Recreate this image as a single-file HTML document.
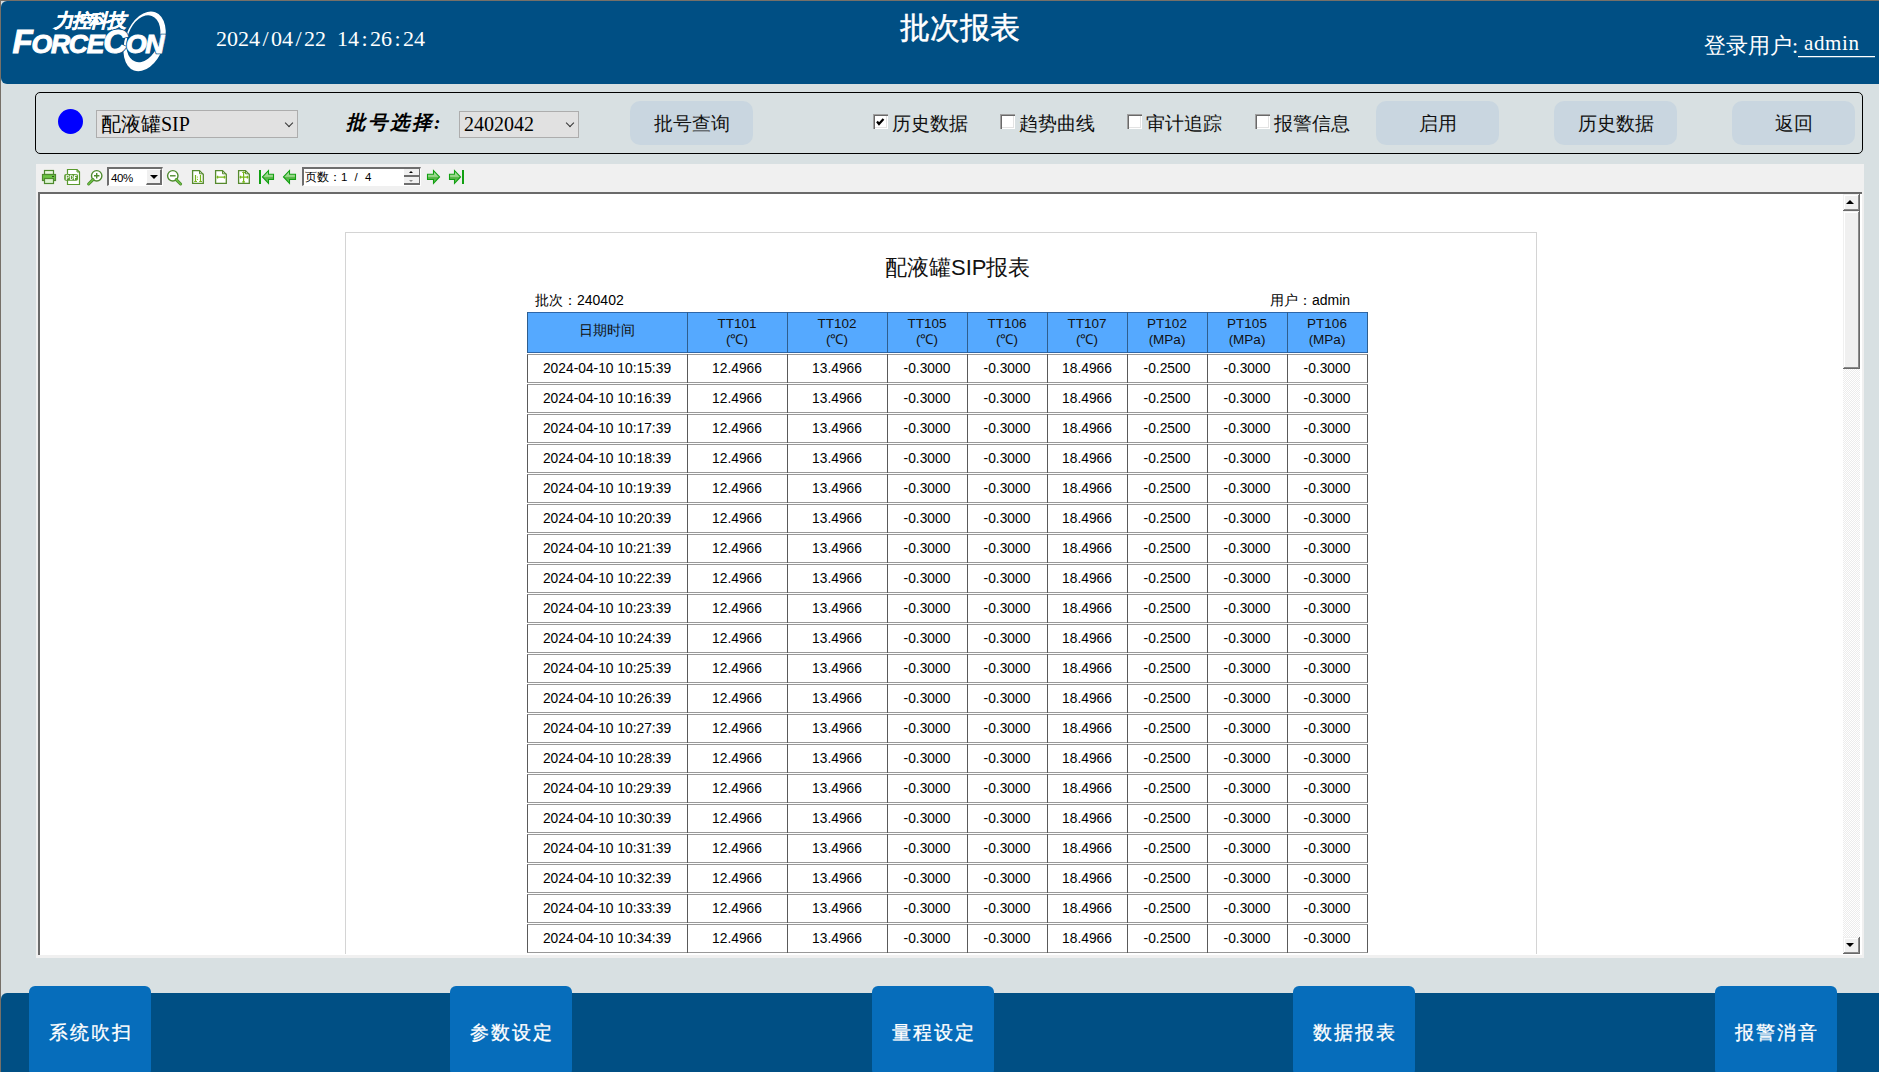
<!DOCTYPE html><html><head><meta charset="utf-8"><style>
*{margin:0;padding:0;box-sizing:border-box}
html,body{width:1879px;height:1072px;overflow:hidden;background:#D8E0E2;font-family:"Liberation Sans",sans-serif}
.a{position:absolute}
#outer{left:0;top:0;width:1879px;height:1072px;border-left:1px solid #767068;border-top:1px solid #767068}
#hdr{left:1px;top:1px;width:1878px;height:83px;background:#004F84;border-radius:6px 0 0 6px}
#title{left:900px;top:11px;font-family:"Liberation Serif",serif;font-size:30px;color:#fff;font-weight:normal;-webkit-text-stroke:0.5px #fff;white-space:nowrap;line-height:34px}
#dt{left:216px;top:28px;font-family:"Liberation Serif",serif;font-size:22px;color:#fff;white-space:nowrap;line-height:22px}
#dt span{display:inline-block;width:11px;text-align:center}
#login{left:1704px;top:34px;font-family:"Liberation Serif",serif;font-size:22px;color:#fff;white-space:nowrap;line-height:24px}
#uline{left:1798px;top:56px;width:77px;height:1px;background:#fff;box-shadow:0 0.5px 0 rgba(255,255,255,.5)}
#adm{left:1804px;top:32px;font-family:"Liberation Serif",serif;font-size:21px;color:#fff;white-space:nowrap;line-height:22px;letter-spacing:0.6px}
#adm span{display:inline-block;width:11px;text-align:center}
#frame{left:35px;top:92px;width:1828px;height:62px;border:1px solid #000;border-radius:5px}
.btn{height:44px;width:123px;background:#C9D6E0;border-radius:10px;font-family:"Liberation Serif",serif;font-size:18.5px;color:#111;text-align:center;line-height:46px;top:101px}
.combo{background:#E1E1E1;border:1px solid #ADADAD;height:27px;font-family:"Liberation Serif",serif;font-size:20px;color:#000;line-height:25px;padding-left:4px;white-space:nowrap}
.chev{position:absolute;right:5px;top:8px;width:6px;height:6px;border-right:1px solid #333;border-bottom:1px solid #333;transform:rotate(45deg)}
.cb{width:15px;height:15px;background:#fff;top:114px;box-shadow:inset 1px 1px #A0A0A0,inset 2px 2px #696969,inset -1px -1px #fff,inset -2px -2px #E3E3E3}
.cbt{top:112px;font-family:"Liberation Serif",serif;font-size:18.5px;line-height:24px;color:#111;white-space:nowrap}
#tb{left:36px;top:164px;width:1828px;height:794px;background:#F0F0F0}
#view{left:38px;top:192px;width:1824px;height:763px;background:#fff;border-top:2px solid #6A6A6A;border-left:2px solid #6A6A6A}
#page{left:345px;top:232px;width:1192px;height:740px;border:1px solid #D4D4D4;background:#fff}
#sb{left:1843px;top:194px;width:17px;height:760px;background:repeating-conic-gradient(#fff 0 25%,#ECECEC 0 50%) 0 0/2px 2px}
.sbb{width:17px;height:17px;background:#F0F0F0;box-shadow:inset -1px -1px #696969,inset 1px 1px #F0F0F0,inset -2px -2px #8A8A8A,inset 2px 2px #fff}
#bot{left:1px;top:993px;width:1878px;height:79px;background:#004F84;border-radius:6px 0 0 0}
.bb{top:986px;width:122px;height:90px;background:#066DBB;border-radius:6px;color:#fff;font-family:"Liberation Serif",serif;font-weight:500;font-size:19px;text-align:center;line-height:20px;padding-top:37px;letter-spacing:2px;text-indent:2px;-webkit-text-stroke:0.3px #fff}
.hd{background:#55A9FF;top:312px;height:41px;border-top:1px solid #2E66A8;border-bottom:1px solid #2E66A8}
.th{top:312px;height:41px;text-align:center;font-size:13.5px;line-height:16px;color:#111;padding-top:4px;white-space:nowrap}
.row{left:527px;width:841px;height:29px;border-top:1px solid #999;border-bottom:1px solid #999;border-left:1px solid #5A5A5A;border-right:1px solid #5A5A5A}
.vl{width:1px;background:#5A5A5A}
.td{height:29px;line-height:29px;text-align:center;font-size:13.8px;color:#000;white-space:nowrap}
.tch{font-size:11.5px;line-height:14px;color:#000;white-space:nowrap}
.tch span{display:inline-block;text-align:center}
.info{font-size:14px;line-height:16px;color:#000;white-space:nowrap}
</style></head><body>
<div class="a" id="outer"></div>
<div class="a" id="hdr"></div>
<svg class="a" style="left:0;top:0" width="180" height="84" viewBox="0 0 180 84">
<path fill="#fff" fill-rule="evenodd" transform="rotate(20 144.6 41.4)" d="M144.60 10.40 A19.50 31.00 0 1 1 144.60 72.40 A19.50 31.00 0 1 1 144.60 10.40 Z M142.60 15.00 A15.80 24.30 0 1 1 142.60 63.60 A15.80 24.30 0 1 1 142.60 15.00 Z"/>
<text x="54" y="27" font-family="Liberation Sans" font-weight="bold" font-style="italic" font-size="19" letter-spacing="-1.3" fill="#fff" stroke="#004F84" stroke-width="2.5">力控科技</text>
<text x="54" y="27" font-family="Liberation Sans" font-weight="bold" font-style="italic" font-size="19" letter-spacing="-1.3" fill="#fff" stroke="#fff" stroke-width="0.4">力控科技</text>
<text x="12.5" y="53.3" font-family="Liberation Sans" font-weight="bold" font-style="italic" font-size="33" letter-spacing="-1.2" fill="#fff" stroke="#004F84" stroke-width="2.5">F<tspan font-size="26.5">ORCE</tspan>C<tspan font-size="26.5">ON</tspan></text>
<text x="12.5" y="53.3" font-family="Liberation Sans" font-weight="bold" font-style="italic" font-size="33" letter-spacing="-1.2" fill="#fff" stroke="#fff" stroke-width="1">F<tspan font-size="26.5">ORCE</tspan>C<tspan font-size="26.5">ON</tspan></text>
</svg>
<div class="a" id="dt"><span>2</span><span>0</span><span>2</span><span>4</span><span>/</span><span>0</span><span>4</span><span>/</span><span>2</span><span>2</span><span>&nbsp;</span><span>1</span><span>4</span><span>:</span><span>2</span><span>6</span><span>:</span><span>2</span><span>4</span></div>
<div class="a" id="title">批次报表</div>
<div class="a" id="login">登录用户:</div>
<div class="a" id="adm">admin</div>
<div class="a" id="uline"></div>
<div class="a" id="frame"></div>
<div class="a" style="left:58px;top:109px;width:25px;height:25px;border-radius:50%;background:#0000FF"></div>
<div class="a combo" style="left:96px;top:110px;width:202px;height:28px;line-height:26px">配液罐SIP<div class="chev" style="top:9px"></div></div>
<div class="a" style="left:346px;top:111px;font-family:'Liberation Serif',serif;font-size:19.5px;font-weight:bold;font-style:italic;line-height:24px;color:#000;white-space:nowrap;letter-spacing:2px">批号选择:</div>
<div class="a combo" style="left:459px;top:111px;width:120px">2402042<div class="chev"></div></div>
<div class="a btn" style="left:630px">批号查询</div>
<div class="a cb" style="left:873px"><svg width="13" height="13" style="position:absolute;left:0;top:0"><path d="M4 7.5 L6 10 L10.5 5" stroke="#000" stroke-width="2.2" fill="none"/></svg></div>
<div class="a cbt" style="left:892px">历史数据</div>
<div class="a cb" style="left:1000px"></div>
<div class="a cbt" style="left:1019px">趋势曲线</div>
<div class="a cb" style="left:1127px"></div>
<div class="a cbt" style="left:1146px">审计追踪</div>
<div class="a cb" style="left:1255px"></div>
<div class="a cbt" style="left:1274px">报警信息</div>
<div class="a btn" style="left:1376px">启用</div>
<div class="a btn" style="left:1554px">历史数据</div>
<div class="a btn" style="left:1732px">返回</div>
<div class="a" id="tb"></div>
<div class="a" id="view"></div>
<svg class="a" style="left:36px;top:164px" width="440" height="28" viewBox="36 164 440 28">
<defs>
<linearGradient id="ag" x1="0" y1="0" x2="0" y2="1"><stop offset="0" stop-color="#BFE8B5"/><stop offset="0.5" stop-color="#8ED27F"/><stop offset="0.55" stop-color="#4DB33F"/><stop offset="1" stop-color="#7CCB6C"/></linearGradient>
</defs>
<!-- printer -->
<rect x="44.5" y="170.5" width="9" height="4" fill="#EAF7E0" stroke="#4E8A2E" stroke-width="1.2"/>
<rect x="42.5" y="174.5" width="13" height="6" fill="#6CC444" stroke="#4E8A2E" stroke-width="1.2"/>
<rect x="44.5" y="178.5" width="9" height="5" fill="#DDF3D2" stroke="#4E8A2E" stroke-width="1.2"/>
<rect x="52" y="176" width="2" height="1" fill="#2F4F1F"/>
<!-- pdf -->
<path d="M67.5 169.5 H77 L79.5 172 V184.5 H67.5 Z" fill="#fff" stroke="#5A9A2E" stroke-width="1.2"/>
<path d="M77 169.5 V172 H79.5" fill="none" stroke="#5A9A2E" stroke-width="1"/>
<rect x="64.2" y="174" width="13.8" height="6.8" rx="1.8" fill="#5A9A2E"/>
<path d="M66.3 180 V175.3 H67.8 Q69 175.3 69 176.6 Q69 177.9 67.8 177.9 H66.3 M70.4 175.3 V179.5 H71.5 Q73.1 179.5 73.1 177.4 Q73.1 175.3 71.5 175.3 Z M74.5 179.8 V175.3 H76.8 M74.5 177.4 H76.3" fill="none" stroke="#fff" stroke-width="1"/>
<!-- zoom in -->
<circle cx="96.7" cy="175.8" r="5.2" fill="#fff" stroke="#4E8A2E" stroke-width="1.4"/>
<path d="M94 175.8 H99.4 M96.7 173.1 V178.5" stroke="#4E8A2E" stroke-width="1.4"/>
<path d="M93 179.6 L88.6 184" stroke="#4E8A2E" stroke-width="3" stroke-linecap="round"/>
<path d="M93 179.6 L88.6 184" stroke="#6CC444" stroke-width="1.4" stroke-linecap="round"/>
<!-- zoom out -->
<circle cx="172.8" cy="175.8" r="5.2" fill="#fff" stroke="#4E8A2E" stroke-width="1.4"/>
<path d="M170 175.8 H175.6" stroke="#4E8A2E" stroke-width="1.4"/>
<path d="M176.2 179.6 L180.6 184" stroke="#4E8A2E" stroke-width="3" stroke-linecap="round"/>
<path d="M176.2 179.6 L180.6 184" stroke="#6CC444" stroke-width="1.4" stroke-linecap="round"/>
<!-- page icons -->
<g fill="#fff" stroke="#568A2E" stroke-width="1.3">
<path d="M192.6 170.6 H199.5 L203.3 174.4 V183.4 H192.6 Z"/>
<path d="M215.6 170.6 H222.5 L226.3 174.4 V183.4 H215.6 Z"/>
<path d="M238.6 170.6 H245.5 L249.3 174.4 V183.4 H238.6 Z"/>
</g>
<g fill="none" stroke="#568A2E" stroke-width="1">
<path d="M199.5 170.6 V173.8 H203.3"/><path d="M222.5 170.6 V173.8 H226.3"/><path d="M245.5 170.6 V173.8 H249.3"/>
</g>
<g stroke="#77B81A" stroke-width="1.2" fill="none">
<path d="M195.5 175 V181.5 M194.2 181.5 H197 M200.5 175 V181.5 M199.2 181.5 H202"/>
<path d="M216.5 177.2 H225.5 M217.6 175.8 V178.6 M224.4 175.8 V178.6"/>
<path d="M239.5 177.2 H248.5 M240.6 175.8 V178.6 M247.4 175.8 V178.6 M243.6 171.5 V182.8 M242.2 172.5 H245 M242.2 181.8 H245"/>
</g>
<circle cx="197.5" cy="177" r="0.6" fill="#77B81A"/><circle cx="197.5" cy="179.3" r="0.6" fill="#77B81A"/>
<!-- arrows -->
<g fill="url(#ag)" stroke="#12A012" stroke-width="1.1" stroke-linejoin="miter">
<path d="M262.5 176.9 L268.5 170.6 V174.3 H273.5 V179.5 H268.5 V183.4 Z"/>
<path d="M283.5 176.9 L289.5 170.6 V174.3 H295.5 V179.5 H289.5 V183.4 Z"/>
<path d="M439.5 176.9 L433.5 170.6 V174.3 H427.5 V179.5 H433.5 V183.4 Z"/>
<path d="M460.5 176.9 L454.5 170.6 V174.3 H449.5 V179.5 H454.5 V183.4 Z"/>
</g>
<rect x="259" y="170" width="2" height="14" fill="#12A012"/>
<rect x="462" y="170" width="2" height="14" fill="#12A012"/>
</svg>
<div class="a" style="left:107px;top:167px;width:56px;height:19px;background:#fff;border-top:2px solid #6E6E6E;border-left:2px solid #6E6E6E;border-right:1px solid #fff;border-bottom:1px solid #fff"></div>
<div class="a" style="left:146px;top:169px;width:16px;height:16px;background:#F0F0F0;border-right:2px solid #6E6E6E;border-bottom:2px solid #6E6E6E;border-top:1px solid #fff;border-left:1px solid #fff"></div>
<div class="a" style="left:150px;top:175px;width:0;height:0;border-left:4px solid transparent;border-right:4px solid transparent;border-top:4px solid #000"></div>
<div class="a tch" style="left:111px;top:171px"><span style="width:6px">4</span><span style="width:6px">0</span><span style="width:6px">%</span></div>
<div class="a" style="left:302px;top:167px;width:119px;height:19px;background:#fff;border-top:2px solid #6E6E6E;border-left:2px solid #6E6E6E;border-right:1px solid #fff;border-bottom:1px solid #fff"></div>
<div class="a" style="left:404px;top:169px;width:16px;height:8px;background:#F0F0F0;border-right:1px solid #6E6E6E;border-bottom:2px solid #6E6E6E"></div>
<div class="a" style="left:404px;top:177px;width:16px;height:8px;background:#F0F0F0;border-right:1px solid #6E6E6E;border-bottom:2px solid #6E6E6E"></div>
<div class="a" style="left:409px;top:171px;width:0;height:0;border-left:2.5px solid transparent;border-right:2.5px solid transparent;border-bottom:2.5px solid #000"></div>
<div class="a" style="left:409px;top:180px;width:0;height:0;border-left:2.5px solid transparent;border-right:2.5px solid transparent;border-top:2.5px solid #888"></div>
<div class="a tch" style="left:305px;top:170px"><span style="width:12px">页</span><span style="width:12px">数</span><span style="width:12px">：</span><span style="width:6px">1</span><span style="width:6px"> </span><span style="width:6px">/</span><span style="width:6px"> </span><span style="width:6px">4</span></div>
<div class="a" style="left:0;top:0;width:1879px;height:1072px;clip-path:inset(194px 36px 118px 40px)">
<div class="a" id="page"></div>
<div class="a" style="left:885px;top:256px;font-size:22px;line-height:24px;color:#111;white-space:nowrap">配液罐SIP报表</div>
<div class="a info" style="left:535px;top:292px">批次：240402</div>
<div class="a info" style="left:1270px;top:292px">用户：admin</div>
<div class="a hd" style="left:527px;width:841px"></div>
<div class="a th" style="left:527px;width:160px;padding-top:11px">日期时间</div>
<div class="a th" style="left:687px;width:100px">TT101<br>(℃)</div>
<div class="a th" style="left:787px;width:100px">TT102<br>(℃)</div>
<div class="a th" style="left:887px;width:80px">TT105<br>(℃)</div>
<div class="a th" style="left:967px;width:80px">TT106<br>(℃)</div>
<div class="a th" style="left:1047px;width:80px">TT107<br>(℃)</div>
<div class="a th" style="left:1127px;width:80px">PT102<br>(MPa)</div>
<div class="a th" style="left:1207px;width:80px">PT105<br>(MPa)</div>
<div class="a th" style="left:1287px;width:80px">PT106<br>(MPa)</div>
<div class="a vl" style="left:527px;top:312px;height:41px;background:#2E5E8E"></div>
<div class="a vl" style="left:687px;top:312px;height:41px;background:#2E5E8E"></div>
<div class="a vl" style="left:787px;top:312px;height:41px;background:#2E5E8E"></div>
<div class="a vl" style="left:887px;top:312px;height:41px;background:#2E5E8E"></div>
<div class="a vl" style="left:967px;top:312px;height:41px;background:#2E5E8E"></div>
<div class="a vl" style="left:1047px;top:312px;height:41px;background:#2E5E8E"></div>
<div class="a vl" style="left:1127px;top:312px;height:41px;background:#2E5E8E"></div>
<div class="a vl" style="left:1207px;top:312px;height:41px;background:#2E5E8E"></div>
<div class="a vl" style="left:1287px;top:312px;height:41px;background:#2E5E8E"></div>
<div class="a vl" style="left:1367px;top:312px;height:41px;background:#2E5E8E"></div>
<div class="a row" style="top:354px"></div>
<div class="a vl" style="left:687px;top:354px;height:29px"></div>
<div class="a vl" style="left:787px;top:354px;height:29px"></div>
<div class="a vl" style="left:887px;top:354px;height:29px"></div>
<div class="a vl" style="left:967px;top:354px;height:29px"></div>
<div class="a vl" style="left:1047px;top:354px;height:29px"></div>
<div class="a vl" style="left:1127px;top:354px;height:29px"></div>
<div class="a vl" style="left:1207px;top:354px;height:29px"></div>
<div class="a vl" style="left:1287px;top:354px;height:29px"></div>
<div class="a td" style="left:527px;top:354px;width:160px">2024-04-10 10:15:39</div>
<div class="a td" style="left:687px;top:354px;width:100px">12.4966</div>
<div class="a td" style="left:787px;top:354px;width:100px">13.4966</div>
<div class="a td" style="left:887px;top:354px;width:80px">-0.3000</div>
<div class="a td" style="left:967px;top:354px;width:80px">-0.3000</div>
<div class="a td" style="left:1047px;top:354px;width:80px">18.4966</div>
<div class="a td" style="left:1127px;top:354px;width:80px">-0.2500</div>
<div class="a td" style="left:1207px;top:354px;width:80px">-0.3000</div>
<div class="a td" style="left:1287px;top:354px;width:80px">-0.3000</div>
<div class="a row" style="top:384px"></div>
<div class="a vl" style="left:687px;top:384px;height:29px"></div>
<div class="a vl" style="left:787px;top:384px;height:29px"></div>
<div class="a vl" style="left:887px;top:384px;height:29px"></div>
<div class="a vl" style="left:967px;top:384px;height:29px"></div>
<div class="a vl" style="left:1047px;top:384px;height:29px"></div>
<div class="a vl" style="left:1127px;top:384px;height:29px"></div>
<div class="a vl" style="left:1207px;top:384px;height:29px"></div>
<div class="a vl" style="left:1287px;top:384px;height:29px"></div>
<div class="a td" style="left:527px;top:384px;width:160px">2024-04-10 10:16:39</div>
<div class="a td" style="left:687px;top:384px;width:100px">12.4966</div>
<div class="a td" style="left:787px;top:384px;width:100px">13.4966</div>
<div class="a td" style="left:887px;top:384px;width:80px">-0.3000</div>
<div class="a td" style="left:967px;top:384px;width:80px">-0.3000</div>
<div class="a td" style="left:1047px;top:384px;width:80px">18.4966</div>
<div class="a td" style="left:1127px;top:384px;width:80px">-0.2500</div>
<div class="a td" style="left:1207px;top:384px;width:80px">-0.3000</div>
<div class="a td" style="left:1287px;top:384px;width:80px">-0.3000</div>
<div class="a row" style="top:414px"></div>
<div class="a vl" style="left:687px;top:414px;height:29px"></div>
<div class="a vl" style="left:787px;top:414px;height:29px"></div>
<div class="a vl" style="left:887px;top:414px;height:29px"></div>
<div class="a vl" style="left:967px;top:414px;height:29px"></div>
<div class="a vl" style="left:1047px;top:414px;height:29px"></div>
<div class="a vl" style="left:1127px;top:414px;height:29px"></div>
<div class="a vl" style="left:1207px;top:414px;height:29px"></div>
<div class="a vl" style="left:1287px;top:414px;height:29px"></div>
<div class="a td" style="left:527px;top:414px;width:160px">2024-04-10 10:17:39</div>
<div class="a td" style="left:687px;top:414px;width:100px">12.4966</div>
<div class="a td" style="left:787px;top:414px;width:100px">13.4966</div>
<div class="a td" style="left:887px;top:414px;width:80px">-0.3000</div>
<div class="a td" style="left:967px;top:414px;width:80px">-0.3000</div>
<div class="a td" style="left:1047px;top:414px;width:80px">18.4966</div>
<div class="a td" style="left:1127px;top:414px;width:80px">-0.2500</div>
<div class="a td" style="left:1207px;top:414px;width:80px">-0.3000</div>
<div class="a td" style="left:1287px;top:414px;width:80px">-0.3000</div>
<div class="a row" style="top:444px"></div>
<div class="a vl" style="left:687px;top:444px;height:29px"></div>
<div class="a vl" style="left:787px;top:444px;height:29px"></div>
<div class="a vl" style="left:887px;top:444px;height:29px"></div>
<div class="a vl" style="left:967px;top:444px;height:29px"></div>
<div class="a vl" style="left:1047px;top:444px;height:29px"></div>
<div class="a vl" style="left:1127px;top:444px;height:29px"></div>
<div class="a vl" style="left:1207px;top:444px;height:29px"></div>
<div class="a vl" style="left:1287px;top:444px;height:29px"></div>
<div class="a td" style="left:527px;top:444px;width:160px">2024-04-10 10:18:39</div>
<div class="a td" style="left:687px;top:444px;width:100px">12.4966</div>
<div class="a td" style="left:787px;top:444px;width:100px">13.4966</div>
<div class="a td" style="left:887px;top:444px;width:80px">-0.3000</div>
<div class="a td" style="left:967px;top:444px;width:80px">-0.3000</div>
<div class="a td" style="left:1047px;top:444px;width:80px">18.4966</div>
<div class="a td" style="left:1127px;top:444px;width:80px">-0.2500</div>
<div class="a td" style="left:1207px;top:444px;width:80px">-0.3000</div>
<div class="a td" style="left:1287px;top:444px;width:80px">-0.3000</div>
<div class="a row" style="top:474px"></div>
<div class="a vl" style="left:687px;top:474px;height:29px"></div>
<div class="a vl" style="left:787px;top:474px;height:29px"></div>
<div class="a vl" style="left:887px;top:474px;height:29px"></div>
<div class="a vl" style="left:967px;top:474px;height:29px"></div>
<div class="a vl" style="left:1047px;top:474px;height:29px"></div>
<div class="a vl" style="left:1127px;top:474px;height:29px"></div>
<div class="a vl" style="left:1207px;top:474px;height:29px"></div>
<div class="a vl" style="left:1287px;top:474px;height:29px"></div>
<div class="a td" style="left:527px;top:474px;width:160px">2024-04-10 10:19:39</div>
<div class="a td" style="left:687px;top:474px;width:100px">12.4966</div>
<div class="a td" style="left:787px;top:474px;width:100px">13.4966</div>
<div class="a td" style="left:887px;top:474px;width:80px">-0.3000</div>
<div class="a td" style="left:967px;top:474px;width:80px">-0.3000</div>
<div class="a td" style="left:1047px;top:474px;width:80px">18.4966</div>
<div class="a td" style="left:1127px;top:474px;width:80px">-0.2500</div>
<div class="a td" style="left:1207px;top:474px;width:80px">-0.3000</div>
<div class="a td" style="left:1287px;top:474px;width:80px">-0.3000</div>
<div class="a row" style="top:504px"></div>
<div class="a vl" style="left:687px;top:504px;height:29px"></div>
<div class="a vl" style="left:787px;top:504px;height:29px"></div>
<div class="a vl" style="left:887px;top:504px;height:29px"></div>
<div class="a vl" style="left:967px;top:504px;height:29px"></div>
<div class="a vl" style="left:1047px;top:504px;height:29px"></div>
<div class="a vl" style="left:1127px;top:504px;height:29px"></div>
<div class="a vl" style="left:1207px;top:504px;height:29px"></div>
<div class="a vl" style="left:1287px;top:504px;height:29px"></div>
<div class="a td" style="left:527px;top:504px;width:160px">2024-04-10 10:20:39</div>
<div class="a td" style="left:687px;top:504px;width:100px">12.4966</div>
<div class="a td" style="left:787px;top:504px;width:100px">13.4966</div>
<div class="a td" style="left:887px;top:504px;width:80px">-0.3000</div>
<div class="a td" style="left:967px;top:504px;width:80px">-0.3000</div>
<div class="a td" style="left:1047px;top:504px;width:80px">18.4966</div>
<div class="a td" style="left:1127px;top:504px;width:80px">-0.2500</div>
<div class="a td" style="left:1207px;top:504px;width:80px">-0.3000</div>
<div class="a td" style="left:1287px;top:504px;width:80px">-0.3000</div>
<div class="a row" style="top:534px"></div>
<div class="a vl" style="left:687px;top:534px;height:29px"></div>
<div class="a vl" style="left:787px;top:534px;height:29px"></div>
<div class="a vl" style="left:887px;top:534px;height:29px"></div>
<div class="a vl" style="left:967px;top:534px;height:29px"></div>
<div class="a vl" style="left:1047px;top:534px;height:29px"></div>
<div class="a vl" style="left:1127px;top:534px;height:29px"></div>
<div class="a vl" style="left:1207px;top:534px;height:29px"></div>
<div class="a vl" style="left:1287px;top:534px;height:29px"></div>
<div class="a td" style="left:527px;top:534px;width:160px">2024-04-10 10:21:39</div>
<div class="a td" style="left:687px;top:534px;width:100px">12.4966</div>
<div class="a td" style="left:787px;top:534px;width:100px">13.4966</div>
<div class="a td" style="left:887px;top:534px;width:80px">-0.3000</div>
<div class="a td" style="left:967px;top:534px;width:80px">-0.3000</div>
<div class="a td" style="left:1047px;top:534px;width:80px">18.4966</div>
<div class="a td" style="left:1127px;top:534px;width:80px">-0.2500</div>
<div class="a td" style="left:1207px;top:534px;width:80px">-0.3000</div>
<div class="a td" style="left:1287px;top:534px;width:80px">-0.3000</div>
<div class="a row" style="top:564px"></div>
<div class="a vl" style="left:687px;top:564px;height:29px"></div>
<div class="a vl" style="left:787px;top:564px;height:29px"></div>
<div class="a vl" style="left:887px;top:564px;height:29px"></div>
<div class="a vl" style="left:967px;top:564px;height:29px"></div>
<div class="a vl" style="left:1047px;top:564px;height:29px"></div>
<div class="a vl" style="left:1127px;top:564px;height:29px"></div>
<div class="a vl" style="left:1207px;top:564px;height:29px"></div>
<div class="a vl" style="left:1287px;top:564px;height:29px"></div>
<div class="a td" style="left:527px;top:564px;width:160px">2024-04-10 10:22:39</div>
<div class="a td" style="left:687px;top:564px;width:100px">12.4966</div>
<div class="a td" style="left:787px;top:564px;width:100px">13.4966</div>
<div class="a td" style="left:887px;top:564px;width:80px">-0.3000</div>
<div class="a td" style="left:967px;top:564px;width:80px">-0.3000</div>
<div class="a td" style="left:1047px;top:564px;width:80px">18.4966</div>
<div class="a td" style="left:1127px;top:564px;width:80px">-0.2500</div>
<div class="a td" style="left:1207px;top:564px;width:80px">-0.3000</div>
<div class="a td" style="left:1287px;top:564px;width:80px">-0.3000</div>
<div class="a row" style="top:594px"></div>
<div class="a vl" style="left:687px;top:594px;height:29px"></div>
<div class="a vl" style="left:787px;top:594px;height:29px"></div>
<div class="a vl" style="left:887px;top:594px;height:29px"></div>
<div class="a vl" style="left:967px;top:594px;height:29px"></div>
<div class="a vl" style="left:1047px;top:594px;height:29px"></div>
<div class="a vl" style="left:1127px;top:594px;height:29px"></div>
<div class="a vl" style="left:1207px;top:594px;height:29px"></div>
<div class="a vl" style="left:1287px;top:594px;height:29px"></div>
<div class="a td" style="left:527px;top:594px;width:160px">2024-04-10 10:23:39</div>
<div class="a td" style="left:687px;top:594px;width:100px">12.4966</div>
<div class="a td" style="left:787px;top:594px;width:100px">13.4966</div>
<div class="a td" style="left:887px;top:594px;width:80px">-0.3000</div>
<div class="a td" style="left:967px;top:594px;width:80px">-0.3000</div>
<div class="a td" style="left:1047px;top:594px;width:80px">18.4966</div>
<div class="a td" style="left:1127px;top:594px;width:80px">-0.2500</div>
<div class="a td" style="left:1207px;top:594px;width:80px">-0.3000</div>
<div class="a td" style="left:1287px;top:594px;width:80px">-0.3000</div>
<div class="a row" style="top:624px"></div>
<div class="a vl" style="left:687px;top:624px;height:29px"></div>
<div class="a vl" style="left:787px;top:624px;height:29px"></div>
<div class="a vl" style="left:887px;top:624px;height:29px"></div>
<div class="a vl" style="left:967px;top:624px;height:29px"></div>
<div class="a vl" style="left:1047px;top:624px;height:29px"></div>
<div class="a vl" style="left:1127px;top:624px;height:29px"></div>
<div class="a vl" style="left:1207px;top:624px;height:29px"></div>
<div class="a vl" style="left:1287px;top:624px;height:29px"></div>
<div class="a td" style="left:527px;top:624px;width:160px">2024-04-10 10:24:39</div>
<div class="a td" style="left:687px;top:624px;width:100px">12.4966</div>
<div class="a td" style="left:787px;top:624px;width:100px">13.4966</div>
<div class="a td" style="left:887px;top:624px;width:80px">-0.3000</div>
<div class="a td" style="left:967px;top:624px;width:80px">-0.3000</div>
<div class="a td" style="left:1047px;top:624px;width:80px">18.4966</div>
<div class="a td" style="left:1127px;top:624px;width:80px">-0.2500</div>
<div class="a td" style="left:1207px;top:624px;width:80px">-0.3000</div>
<div class="a td" style="left:1287px;top:624px;width:80px">-0.3000</div>
<div class="a row" style="top:654px"></div>
<div class="a vl" style="left:687px;top:654px;height:29px"></div>
<div class="a vl" style="left:787px;top:654px;height:29px"></div>
<div class="a vl" style="left:887px;top:654px;height:29px"></div>
<div class="a vl" style="left:967px;top:654px;height:29px"></div>
<div class="a vl" style="left:1047px;top:654px;height:29px"></div>
<div class="a vl" style="left:1127px;top:654px;height:29px"></div>
<div class="a vl" style="left:1207px;top:654px;height:29px"></div>
<div class="a vl" style="left:1287px;top:654px;height:29px"></div>
<div class="a td" style="left:527px;top:654px;width:160px">2024-04-10 10:25:39</div>
<div class="a td" style="left:687px;top:654px;width:100px">12.4966</div>
<div class="a td" style="left:787px;top:654px;width:100px">13.4966</div>
<div class="a td" style="left:887px;top:654px;width:80px">-0.3000</div>
<div class="a td" style="left:967px;top:654px;width:80px">-0.3000</div>
<div class="a td" style="left:1047px;top:654px;width:80px">18.4966</div>
<div class="a td" style="left:1127px;top:654px;width:80px">-0.2500</div>
<div class="a td" style="left:1207px;top:654px;width:80px">-0.3000</div>
<div class="a td" style="left:1287px;top:654px;width:80px">-0.3000</div>
<div class="a row" style="top:684px"></div>
<div class="a vl" style="left:687px;top:684px;height:29px"></div>
<div class="a vl" style="left:787px;top:684px;height:29px"></div>
<div class="a vl" style="left:887px;top:684px;height:29px"></div>
<div class="a vl" style="left:967px;top:684px;height:29px"></div>
<div class="a vl" style="left:1047px;top:684px;height:29px"></div>
<div class="a vl" style="left:1127px;top:684px;height:29px"></div>
<div class="a vl" style="left:1207px;top:684px;height:29px"></div>
<div class="a vl" style="left:1287px;top:684px;height:29px"></div>
<div class="a td" style="left:527px;top:684px;width:160px">2024-04-10 10:26:39</div>
<div class="a td" style="left:687px;top:684px;width:100px">12.4966</div>
<div class="a td" style="left:787px;top:684px;width:100px">13.4966</div>
<div class="a td" style="left:887px;top:684px;width:80px">-0.3000</div>
<div class="a td" style="left:967px;top:684px;width:80px">-0.3000</div>
<div class="a td" style="left:1047px;top:684px;width:80px">18.4966</div>
<div class="a td" style="left:1127px;top:684px;width:80px">-0.2500</div>
<div class="a td" style="left:1207px;top:684px;width:80px">-0.3000</div>
<div class="a td" style="left:1287px;top:684px;width:80px">-0.3000</div>
<div class="a row" style="top:714px"></div>
<div class="a vl" style="left:687px;top:714px;height:29px"></div>
<div class="a vl" style="left:787px;top:714px;height:29px"></div>
<div class="a vl" style="left:887px;top:714px;height:29px"></div>
<div class="a vl" style="left:967px;top:714px;height:29px"></div>
<div class="a vl" style="left:1047px;top:714px;height:29px"></div>
<div class="a vl" style="left:1127px;top:714px;height:29px"></div>
<div class="a vl" style="left:1207px;top:714px;height:29px"></div>
<div class="a vl" style="left:1287px;top:714px;height:29px"></div>
<div class="a td" style="left:527px;top:714px;width:160px">2024-04-10 10:27:39</div>
<div class="a td" style="left:687px;top:714px;width:100px">12.4966</div>
<div class="a td" style="left:787px;top:714px;width:100px">13.4966</div>
<div class="a td" style="left:887px;top:714px;width:80px">-0.3000</div>
<div class="a td" style="left:967px;top:714px;width:80px">-0.3000</div>
<div class="a td" style="left:1047px;top:714px;width:80px">18.4966</div>
<div class="a td" style="left:1127px;top:714px;width:80px">-0.2500</div>
<div class="a td" style="left:1207px;top:714px;width:80px">-0.3000</div>
<div class="a td" style="left:1287px;top:714px;width:80px">-0.3000</div>
<div class="a row" style="top:744px"></div>
<div class="a vl" style="left:687px;top:744px;height:29px"></div>
<div class="a vl" style="left:787px;top:744px;height:29px"></div>
<div class="a vl" style="left:887px;top:744px;height:29px"></div>
<div class="a vl" style="left:967px;top:744px;height:29px"></div>
<div class="a vl" style="left:1047px;top:744px;height:29px"></div>
<div class="a vl" style="left:1127px;top:744px;height:29px"></div>
<div class="a vl" style="left:1207px;top:744px;height:29px"></div>
<div class="a vl" style="left:1287px;top:744px;height:29px"></div>
<div class="a td" style="left:527px;top:744px;width:160px">2024-04-10 10:28:39</div>
<div class="a td" style="left:687px;top:744px;width:100px">12.4966</div>
<div class="a td" style="left:787px;top:744px;width:100px">13.4966</div>
<div class="a td" style="left:887px;top:744px;width:80px">-0.3000</div>
<div class="a td" style="left:967px;top:744px;width:80px">-0.3000</div>
<div class="a td" style="left:1047px;top:744px;width:80px">18.4966</div>
<div class="a td" style="left:1127px;top:744px;width:80px">-0.2500</div>
<div class="a td" style="left:1207px;top:744px;width:80px">-0.3000</div>
<div class="a td" style="left:1287px;top:744px;width:80px">-0.3000</div>
<div class="a row" style="top:774px"></div>
<div class="a vl" style="left:687px;top:774px;height:29px"></div>
<div class="a vl" style="left:787px;top:774px;height:29px"></div>
<div class="a vl" style="left:887px;top:774px;height:29px"></div>
<div class="a vl" style="left:967px;top:774px;height:29px"></div>
<div class="a vl" style="left:1047px;top:774px;height:29px"></div>
<div class="a vl" style="left:1127px;top:774px;height:29px"></div>
<div class="a vl" style="left:1207px;top:774px;height:29px"></div>
<div class="a vl" style="left:1287px;top:774px;height:29px"></div>
<div class="a td" style="left:527px;top:774px;width:160px">2024-04-10 10:29:39</div>
<div class="a td" style="left:687px;top:774px;width:100px">12.4966</div>
<div class="a td" style="left:787px;top:774px;width:100px">13.4966</div>
<div class="a td" style="left:887px;top:774px;width:80px">-0.3000</div>
<div class="a td" style="left:967px;top:774px;width:80px">-0.3000</div>
<div class="a td" style="left:1047px;top:774px;width:80px">18.4966</div>
<div class="a td" style="left:1127px;top:774px;width:80px">-0.2500</div>
<div class="a td" style="left:1207px;top:774px;width:80px">-0.3000</div>
<div class="a td" style="left:1287px;top:774px;width:80px">-0.3000</div>
<div class="a row" style="top:804px"></div>
<div class="a vl" style="left:687px;top:804px;height:29px"></div>
<div class="a vl" style="left:787px;top:804px;height:29px"></div>
<div class="a vl" style="left:887px;top:804px;height:29px"></div>
<div class="a vl" style="left:967px;top:804px;height:29px"></div>
<div class="a vl" style="left:1047px;top:804px;height:29px"></div>
<div class="a vl" style="left:1127px;top:804px;height:29px"></div>
<div class="a vl" style="left:1207px;top:804px;height:29px"></div>
<div class="a vl" style="left:1287px;top:804px;height:29px"></div>
<div class="a td" style="left:527px;top:804px;width:160px">2024-04-10 10:30:39</div>
<div class="a td" style="left:687px;top:804px;width:100px">12.4966</div>
<div class="a td" style="left:787px;top:804px;width:100px">13.4966</div>
<div class="a td" style="left:887px;top:804px;width:80px">-0.3000</div>
<div class="a td" style="left:967px;top:804px;width:80px">-0.3000</div>
<div class="a td" style="left:1047px;top:804px;width:80px">18.4966</div>
<div class="a td" style="left:1127px;top:804px;width:80px">-0.2500</div>
<div class="a td" style="left:1207px;top:804px;width:80px">-0.3000</div>
<div class="a td" style="left:1287px;top:804px;width:80px">-0.3000</div>
<div class="a row" style="top:834px"></div>
<div class="a vl" style="left:687px;top:834px;height:29px"></div>
<div class="a vl" style="left:787px;top:834px;height:29px"></div>
<div class="a vl" style="left:887px;top:834px;height:29px"></div>
<div class="a vl" style="left:967px;top:834px;height:29px"></div>
<div class="a vl" style="left:1047px;top:834px;height:29px"></div>
<div class="a vl" style="left:1127px;top:834px;height:29px"></div>
<div class="a vl" style="left:1207px;top:834px;height:29px"></div>
<div class="a vl" style="left:1287px;top:834px;height:29px"></div>
<div class="a td" style="left:527px;top:834px;width:160px">2024-04-10 10:31:39</div>
<div class="a td" style="left:687px;top:834px;width:100px">12.4966</div>
<div class="a td" style="left:787px;top:834px;width:100px">13.4966</div>
<div class="a td" style="left:887px;top:834px;width:80px">-0.3000</div>
<div class="a td" style="left:967px;top:834px;width:80px">-0.3000</div>
<div class="a td" style="left:1047px;top:834px;width:80px">18.4966</div>
<div class="a td" style="left:1127px;top:834px;width:80px">-0.2500</div>
<div class="a td" style="left:1207px;top:834px;width:80px">-0.3000</div>
<div class="a td" style="left:1287px;top:834px;width:80px">-0.3000</div>
<div class="a row" style="top:864px"></div>
<div class="a vl" style="left:687px;top:864px;height:29px"></div>
<div class="a vl" style="left:787px;top:864px;height:29px"></div>
<div class="a vl" style="left:887px;top:864px;height:29px"></div>
<div class="a vl" style="left:967px;top:864px;height:29px"></div>
<div class="a vl" style="left:1047px;top:864px;height:29px"></div>
<div class="a vl" style="left:1127px;top:864px;height:29px"></div>
<div class="a vl" style="left:1207px;top:864px;height:29px"></div>
<div class="a vl" style="left:1287px;top:864px;height:29px"></div>
<div class="a td" style="left:527px;top:864px;width:160px">2024-04-10 10:32:39</div>
<div class="a td" style="left:687px;top:864px;width:100px">12.4966</div>
<div class="a td" style="left:787px;top:864px;width:100px">13.4966</div>
<div class="a td" style="left:887px;top:864px;width:80px">-0.3000</div>
<div class="a td" style="left:967px;top:864px;width:80px">-0.3000</div>
<div class="a td" style="left:1047px;top:864px;width:80px">18.4966</div>
<div class="a td" style="left:1127px;top:864px;width:80px">-0.2500</div>
<div class="a td" style="left:1207px;top:864px;width:80px">-0.3000</div>
<div class="a td" style="left:1287px;top:864px;width:80px">-0.3000</div>
<div class="a row" style="top:894px"></div>
<div class="a vl" style="left:687px;top:894px;height:29px"></div>
<div class="a vl" style="left:787px;top:894px;height:29px"></div>
<div class="a vl" style="left:887px;top:894px;height:29px"></div>
<div class="a vl" style="left:967px;top:894px;height:29px"></div>
<div class="a vl" style="left:1047px;top:894px;height:29px"></div>
<div class="a vl" style="left:1127px;top:894px;height:29px"></div>
<div class="a vl" style="left:1207px;top:894px;height:29px"></div>
<div class="a vl" style="left:1287px;top:894px;height:29px"></div>
<div class="a td" style="left:527px;top:894px;width:160px">2024-04-10 10:33:39</div>
<div class="a td" style="left:687px;top:894px;width:100px">12.4966</div>
<div class="a td" style="left:787px;top:894px;width:100px">13.4966</div>
<div class="a td" style="left:887px;top:894px;width:80px">-0.3000</div>
<div class="a td" style="left:967px;top:894px;width:80px">-0.3000</div>
<div class="a td" style="left:1047px;top:894px;width:80px">18.4966</div>
<div class="a td" style="left:1127px;top:894px;width:80px">-0.2500</div>
<div class="a td" style="left:1207px;top:894px;width:80px">-0.3000</div>
<div class="a td" style="left:1287px;top:894px;width:80px">-0.3000</div>
<div class="a row" style="top:924px"></div>
<div class="a vl" style="left:687px;top:924px;height:29px"></div>
<div class="a vl" style="left:787px;top:924px;height:29px"></div>
<div class="a vl" style="left:887px;top:924px;height:29px"></div>
<div class="a vl" style="left:967px;top:924px;height:29px"></div>
<div class="a vl" style="left:1047px;top:924px;height:29px"></div>
<div class="a vl" style="left:1127px;top:924px;height:29px"></div>
<div class="a vl" style="left:1207px;top:924px;height:29px"></div>
<div class="a vl" style="left:1287px;top:924px;height:29px"></div>
<div class="a td" style="left:527px;top:924px;width:160px">2024-04-10 10:34:39</div>
<div class="a td" style="left:687px;top:924px;width:100px">12.4966</div>
<div class="a td" style="left:787px;top:924px;width:100px">13.4966</div>
<div class="a td" style="left:887px;top:924px;width:80px">-0.3000</div>
<div class="a td" style="left:967px;top:924px;width:80px">-0.3000</div>
<div class="a td" style="left:1047px;top:924px;width:80px">18.4966</div>
<div class="a td" style="left:1127px;top:924px;width:80px">-0.2500</div>
<div class="a td" style="left:1207px;top:924px;width:80px">-0.3000</div>
<div class="a td" style="left:1287px;top:924px;width:80px">-0.3000</div>
</div>
<div class="a" id="sb"></div>
<div class="a sbb" style="left:1843px;top:194px"></div>
<div class="a" style="left:1846px;top:200px;width:0;height:0;border-left:4px solid transparent;border-right:4px solid transparent;border-bottom:4px solid #000"></div>
<div class="a sbb" style="left:1843px;top:211px;height:158px"></div>
<div class="a sbb" style="left:1843px;top:937px"></div>
<div class="a" style="left:1846px;top:943px;width:0;height:0;border-left:4px solid transparent;border-right:4px solid transparent;border-top:4px solid #000"></div>
<div class="a" id="bot"></div>
<div class="a bb" style="left:29px">系统吹扫</div>
<div class="a bb" style="left:450px">参数设定</div>
<div class="a bb" style="left:872px">量程设定</div>
<div class="a bb" style="left:1293px">数据报表</div>
<div class="a bb" style="left:1715px">报警消音</div>
</body></html>
